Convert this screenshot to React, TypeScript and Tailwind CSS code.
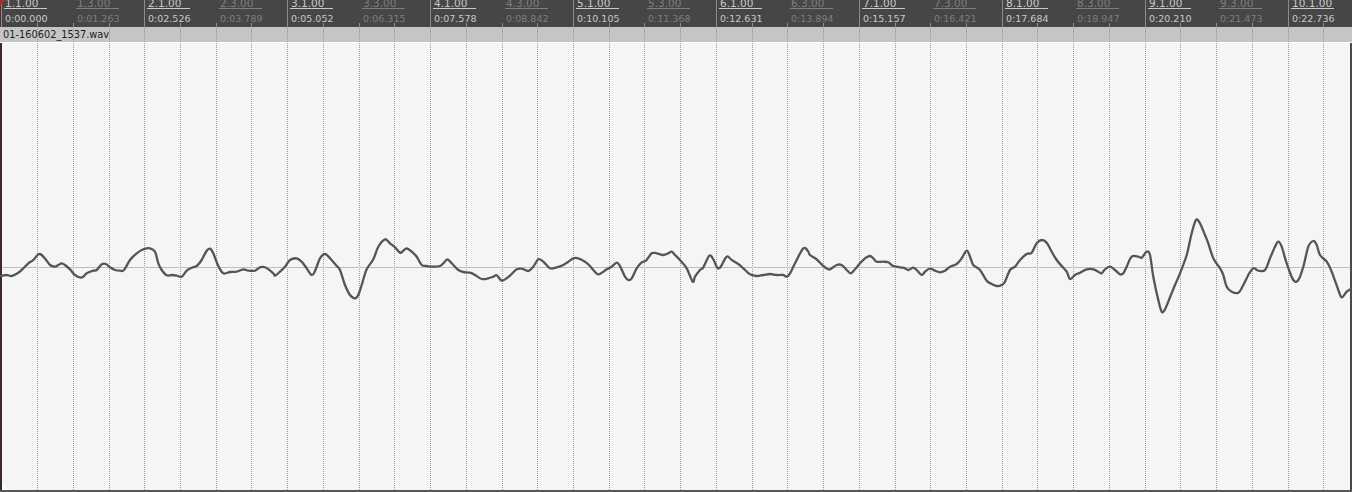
const MEASURE = 142.9;
const ORIGIN = 1.4;
const CENTER = 267;

const TIMES = [
  '0:00.000', '0:01.263', '0:02.526', '0:03.789', '0:05.052', '0:06.315', '0:07.578',
  '0:08.842', '0:10.105', '0:11.368', '0:12.631', '0:13.894', '0:15.157', '0:16.421',
  '0:17.684', '0:18.947', '0:20.210', '0:21.473', '0:22.736',
];

// waveform traced from the 3x zoom, [offsetX, [zx, zy]...]
const SEGMENTS: [number, number[][]][] = [
  [0, [[0,198],[20,195],[35,198],[55,188],[70,175],[85,160],[100,150],[115,133],[125,135],[140,152],[150,165],[165,170],[175,165],[185,160],[195,165],[210,178],[225,195],[245,203],[260,190],[280,182],[290,180],[305,163],[318,162],[330,172],[345,180],[360,182],[372,180],[390,150],[410,130],[430,118],[450,115],[465,125],[475,160],[485,180],[500,196],[515,195],[530,197],[545,200],[560,182],[575,173],[590,168],[605,150],[620,122],[630,116],[640,130],[655,168],[670,190],[690,186],[710,185],[730,178],[745,182],[765,182],[780,172],[795,172]]],
  [270, [[10,190],[15,197],[30,185],[45,170],[60,150],[80,145],[95,155],[110,175],[125,195],[135,183],[150,145],[165,132],[180,145],[200,168],[210,180],[225,225],[240,255],[255,265],[265,255],[275,225],[290,178],[310,148],[325,110],[345,88],[360,100],[375,112],[390,128],[400,122],[410,115],[425,125],[440,140],[455,165],[470,168],[490,170],[510,168],[520,160],[532,148],[545,160],[565,180],[580,186],[600,188],[615,195],[635,207],[655,205],[670,200],[680,196],[695,212],[710,205],[725,192],[740,178],[755,176],[775,183],[790,170],[805,148]]],
  [540, [[10,155],[30,175],[50,172],[70,165],[85,155],[100,145],[115,145],[135,155],[150,168],[160,180],[175,193],[190,185],[200,178],[215,170],[230,158],[240,168],[255,200],[265,210],[275,205],[290,175],[305,157],[318,152],[335,130],[350,130],[370,135],[385,130],[395,125],[405,135],[420,150],[440,175],[458,215],[465,200],[480,180],[490,172],[508,137],[520,148],[530,170],[540,173],[560,140],[575,150],[595,162],[610,175],[630,193],[650,198],[670,195],[690,192],[710,195],[730,195],[740,200],[750,190],[765,160],[790,115],[805,125]]],
  [810, [[0,135],[20,148],[40,168],[55,178],[65,175],[80,165],[95,165],[110,180],[122,190],[135,178],[150,160],[165,145],[180,138],[190,145],[200,155],[220,155],[235,157],[250,168],[270,172],[285,175],[295,180],[310,173],[320,180],[335,195],[345,185],[360,176],[375,182],[390,187],[405,182],[420,170],[440,162],[455,145],[470,122],[480,140],[490,165],[510,180],[530,212],[545,222],[560,228],[575,225],[585,215],[600,180],[615,170],[630,150],[650,132],[665,128],[680,100],[695,90],[710,98],[725,125],[740,150],[755,168],[770,185],[780,207],[795,195]]],
  [1080, [[0,188],[20,178],[40,178],[55,185],[65,190],[75,178],[90,170],[105,180],[120,193],[130,190],[140,170],[155,140],[175,140],[185,143],[200,125],[210,135],[220,200],[235,270],[245,305],[255,298],[270,262],[285,225],[300,190],[320,135],[335,70],[348,30],[360,40],[375,75],[385,100],[400,145],[420,175],[430,195],[440,230],[455,245],[475,248],[490,225],[505,195],[520,175],[535,182],[555,180],[570,145],[585,110],[595,95],[605,110],[620,160],[640,210],[655,210],[670,170],[685,110],[700,93],[710,105],[720,135],[740,155],[755,185],[775,240],[785,262],[800,245],[816,235]]],
];

const pts = SEGMENTS.flatMap(([off, list]) => list.map(([zx, zy]) => [off + zx / 3, 210 + zy / 3]));

// catmull-rom -> cubic bezier, keeps the trace smooth like the original
function smoothPath(p: number[][]) {
  let d = `M${p[0][0].toFixed(1)},${p[0][1].toFixed(1)}`;
  for (let i = 0; i < p.length - 1; i++) {
    const p0 = p[Math.max(0, i - 1)];
    const p1 = p[i];
    const p2 = p[i + 1];
    const p3 = p[Math.min(p.length - 1, i + 2)];
    const c1x = p1[0] + (p2[0] - p0[0]) / 6;
    const c1y = p1[1] + (p2[1] - p0[1]) / 6;
    const c2x = p2[0] - (p3[0] - p1[0]) / 6;
    const c2y = p2[1] - (p3[1] - p1[1]) / 6;
    d += ` C${c1x.toFixed(1)},${c1y.toFixed(1)} ${c2x.toFixed(1)},${c2y.toFixed(1)} ${p2[0].toFixed(1)},${p2[1].toFixed(1)}`;
  }
  return d;
}

const wavePath = smoothPath(pts);

function RulerLabel({ i }: { i: number }) {
  const major = i % 2 === 0;
  const x = ORIGIN + (i * MEASURE) / 2;
  const text = major ? `${i / 2 + 1}.1.00` : `${(i - 1) / 2 + 1}.3.00`;
  const color = major ? 'text-[#c9c9c9]' : 'text-[#7e7e7e]';
  return (
    <div className="absolute top-0 h-[27px]" style={{ left: Math.round(x) }}>
      {major && <div className="absolute left-0 top-0 w-px h-[27px] bg-[#8c8c8c]" />}
      <div className={`absolute left-[4px] top-[-3px] text-[10.5px] leading-[12px] whitespace-nowrap ${color}`}>
        {text}
      </div>
      <div className={`absolute left-[3px] top-[8px] w-[43px] h-px ${major ? 'bg-[#c9c9c9]' : 'bg-[#7e7e7e]'}`} />
      <div className={`absolute left-[4px] top-[13px] text-[9.5px] leading-[11px] whitespace-nowrap ${color}`}>
        {TIMES[i]}
      </div>
    </div>
  );
}

export default function App() {
  const quarters = Array.from({ length: 38 }, (_, k) => k);
  return (
    <div className="w-[1352px] h-[492px] flex flex-col overflow-hidden bg-[#f4f5f4] font-['DejaVu_Sans',sans-serif]">
      {/* ruler */}
      <div className="relative h-[27px] shrink-0 bg-[#464646] overflow-hidden">
        {quarters.filter((k) => k % 4 !== 0).map((k) => (
          <div
            key={k}
            className="absolute top-[23px] w-px h-[4px] bg-[#8c8c8c]"
            style={{ left: Math.round(ORIGIN + k * (MEASURE / 4)) }}
          />
        ))}
        {TIMES.map((_, i) => (
          <RulerLabel key={i} i={i} />
        ))}
        <svg className="absolute left-0 top-0" width="8" height="27" viewBox="0 0 8 27">
          <path d="M0.5 0 V27" stroke="#5a2a2a" strokeWidth="1" />
          <path d="M0 0 H6 L0 6 Z" fill="#b02a2a" />
        </svg>
      </div>

      {/* track */}
      <div className="relative flex-1 flex flex-col">
        <div className="h-[15px] shrink-0 bg-[#c4c6c5] pl-[3px] pt-[2px] text-[9.8px] leading-[12px] text-[#1c1c1c]">
          <span className="relative z-10">01-160602_1537.wav</span>
        </div>
        <div className="h-px shrink-0 bg-white" />
        <div className="flex-1 bg-[#f4f5f4] border-l-2 border-l-[#3e2929] border-r-2 border-r-[#4a4a4a]" />
        <div className="h-[2px] shrink-0 bg-[#565656]" />

        <svg
          className="absolute inset-0 pointer-events-none"
          width="1352"
          height="465"
          viewBox="0 27 1352 465"
        >
          {quarters.slice(1).map((k) => {
            const x = Math.round(ORIGIN + k * (MEASURE / 4)) + 0.5;
            return (
              <line key={k} x1={x} y1={27} x2={x} y2={490} stroke="#9c9c9c" strokeWidth="1" strokeDasharray="1 1" />
            );
          })}
          <line x1={2} y1={CENTER + 0.5} x2={1350} y2={CENTER + 0.5} stroke="#bdbdbd" strokeWidth="1" />
          <path d={wavePath} fill="none" stroke="#555555" strokeWidth="2.3" strokeLinejoin="round" strokeLinecap="round" />
          <path d="M2 484 L9 490 H2 Z" fill="#ffffff" />
        </svg>
      </div>
    </div>
  );
}
